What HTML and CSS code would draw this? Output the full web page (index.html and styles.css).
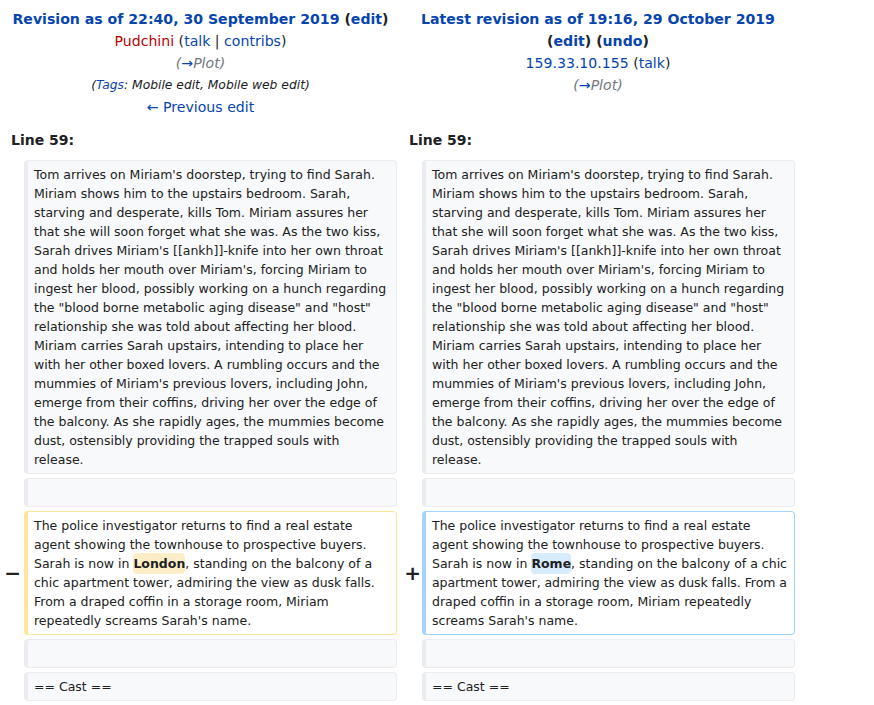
FILE: index.html
```html
<!DOCTYPE html>
<html>
<head>
<meta charset="utf-8">
<link rel="stylesheet" href="styles.css">
</head>
<body>
<div class="diff">
  <div class="title otitle">
    <div class="rev"><a class="strong" href="#">Revision as of 22:40, 30 September 2019</a> <span class="bold">(<a href="#">edit</a>)</span></div>
    <div><a class="new" href="#">Pudchini</a> (<a href="#">talk</a> | <a href="#">contribs</a>)</div>
    <div class="comment">(<a href="#">→</a>Plot)</div>
    <div class="tags">(<a href="#">Tags</a>: Mobile edit, Mobile web edit)</div>
    <div><a href="#">← Previous edit</a></div>
  </div>
  <div class="title ntitle">
    <div class="rev"><a class="strong" href="#">Latest revision as of 19:16, 29 October 2019</a></div>
    <div class="bold">(<a href="#">edit</a>) (<a href="#">undo</a>)</div>
    <div><a href="#">159.33.10.155</a> (<a href="#">talk</a>)</div>
    <div class="comment">(<a href="#">→</a>Plot)</div>
  </div>

  <div class="lineno lineno-left">Line 59:</div>
  <div class="lineno lineno-right">Line 59:</div>

  <div class="marker marker-left"></div>
  <div class="cell context">Tom arrives on Miriam's doorstep, trying to find Sarah. Miriam shows him to the upstairs bedroom. Sarah, starving and desperate, kills Tom. Miriam assures her that she will soon forget what she was. As the two kiss, Sarah drives Miriam's [[ankh]]-knife into her own throat and holds her mouth over Miriam's, forcing Miriam to ingest her blood, possibly working on a hunch regarding the "blood borne metabolic aging disease" and "host" relationship she was told about affecting her blood. Miriam carries Sarah upstairs, intending to place her with her other boxed lovers. A rumbling occurs and the mummies of Miriam's previous lovers, including John, emerge from their coffins, driving her over the edge of the balcony. As she rapidly ages, the mummies become dust, ostensibly providing the trapped souls with release.</div>
  <div class="marker marker-right"></div>
  <div class="cell context">Tom arrives on Miriam's doorstep, trying to find Sarah. Miriam shows him to the upstairs bedroom. Sarah, starving and desperate, kills Tom. Miriam assures her that she will soon forget what she was. As the two kiss, Sarah drives Miriam's [[ankh]]-knife into her own throat and holds her mouth over Miriam's, forcing Miriam to ingest her blood, possibly working on a hunch regarding the "blood borne metabolic aging disease" and "host" relationship she was told about affecting her blood. Miriam carries Sarah upstairs, intending to place her with her other boxed lovers. A rumbling occurs and the mummies of Miriam's previous lovers, including John, emerge from their coffins, driving her over the edge of the balcony. As she rapidly ages, the mummies become dust, ostensibly providing the trapped souls with release.</div>

  <div class="marker marker-left"></div>
  <div class="cell context empty"></div>
  <div class="marker marker-right"></div>
  <div class="cell context empty"></div>

  <div class="marker marker-left">−</div>
  <div class="cell deleted">The police investigator returns to find a real estate agent showing the townhouse to prospective buyers. Sarah is now in <del class="hl">London</del>, standing on the balcony of a chic apartment tower, admiring the view as dusk falls. From a draped coffin in a storage room, Miriam repeatedly screams Sarah's name.</div>
  <div class="marker marker-right">+</div>
  <div class="cell added">The police investigator returns to find a real estate agent showing the townhouse to prospective buyers. Sarah is now in <ins class="hl">Rome</ins>, standing on the balcony of a chic <span class="fit">apartment tower, admiring the view as dusk falls. From a</span> draped coffin in a storage room, Miriam repeatedly screams Sarah's name.</div>

  <div class="marker marker-left"></div>
  <div class="cell context empty"></div>
  <div class="marker marker-right"></div>
  <div class="cell context empty"></div>

  <div class="marker marker-left"></div>
  <div class="cell context">== Cast ==</div>
  <div class="marker marker-right"></div>
  <div class="cell context">== Cast ==</div>
</div>
</body>
</html>
```
FILE: styles.css
```css
html, body {
  margin: 0;
  padding: 0;
  background: #ffffff;
}
body {
  padding: 8px 0 0 8px;
  font-family: "DejaVu Sans", sans-serif;
  color: #202122;
}
a {
  color: #0645ad;
  text-decoration: none;
}
a.new {
  color: #ba0000;
}
.diff {
  display: grid;
  grid-template-columns: 16px 373px 25px 373px;
  column-gap: 0;
  row-gap: 4px;
  width: 787px;
}
.title {
  grid-column: span 2;
  text-align: center;
  font-size: 14.1px;
  line-height: 22px;
}
.otitle {
  padding-right: 4px;
}
.ntitle {
  padding-left: 4px;
}
.title .rev {
  font-weight: bold;
}
.bold {
  font-weight: bold;
}
.comment {
  font-style: italic;
  color: #72777d;
}
.tags {
  font-style: italic;
  font-size: 12.3px;
}
.lineno {
  grid-column: span 2;
  font-weight: bold;
  font-size: 14px;
  line-height: 22px;
  padding: 7px 0 5px 3px;
}
.lineno-right {
  padding-left: 12px;
}
.marker {
  display: flex;
  align-items: center;
  justify-content: flex-end;
  font-weight: bold;
  font-size: 20px;
}
.marker-left {
  padding-right: 3px;
}
.marker-right {
  padding-right: 1px;
}
.cell {
  font-size: 12.5px;
  line-height: 19px;
  padding: 4px 6px 4px 6px;
  border: 1px solid #eaecf0;
  border-left-width: 4px;
  border-radius: 4px;
  overflow-wrap: break-word;
}
.context {
  background: #f8f9fa;
}
.empty {
  min-height: 19px;
}
.deleted {
  border-color: #ffe49c;
}
.added {
  border-color: #a3d3ff;
}
.fit {
  letter-spacing: -0.06px;
}
.hl {
  text-decoration: none;
  font-weight: bold;
  border-radius: 4px;
  padding: 3px 0;
}
del.hl {
  background: #feeec8;
}
ins.hl {
  background: #d8ecff;
}
```
